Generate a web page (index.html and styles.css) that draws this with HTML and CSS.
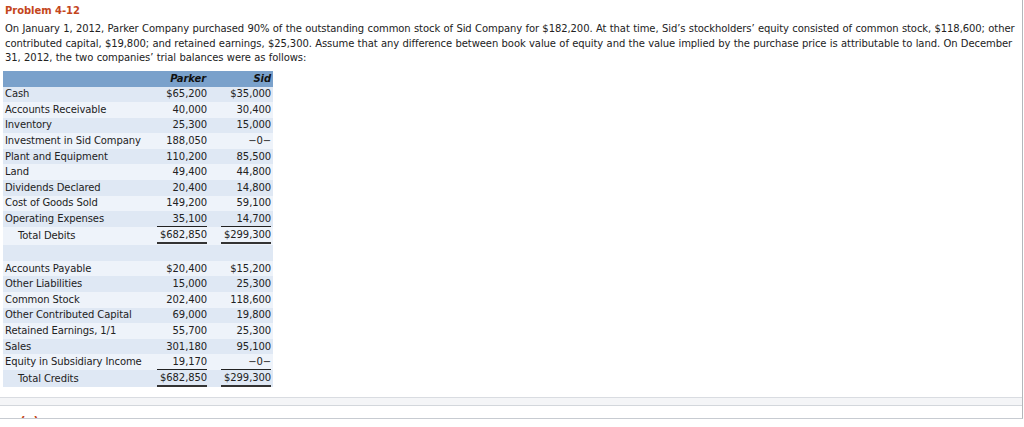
FILE: index.html
```html
<!DOCTYPE html>
<html>
<head>
<meta charset="utf-8">
<link rel="stylesheet" href="styles.css">
</head>
<body>
<div class="page">
  <div class="content">
    <div class="title">Problem 4-12</div>
    <p class="intro">On January 1, 2012, Parker Company purchased 90% of the outstanding common stock of Sid Company for $182,200. At that time, Sid’s stockholders’ equity consisted of common stock, $118,600; other contributed capital, $19,800; and retained earnings, $25,300. Assume that any difference between book value of equity and the value implied by the purchase price is attributable to land. On December 31, 2012, the two companies’ trial balances were as follows:</p>
    <table class="tb">
      <thead>
        <tr><th class="lbl"></th><th>Parker</th><th>Sid</th></tr>
      </thead>
      <tbody>
        <tr class="d"><td class="lbl">Cash</td><td>$65,200</td><td>$35,000</td></tr>
        <tr class="l"><td class="lbl">Accounts Receivable</td><td>40,000</td><td>30,400</td></tr>
        <tr class="d"><td class="lbl">Inventory</td><td>25,300</td><td>15,000</td></tr>
        <tr class="l"><td class="lbl">Investment in Sid Company</td><td>188,050</td><td>&minus;0&minus;</td></tr>
        <tr class="d"><td class="lbl">Plant and Equipment</td><td>110,200</td><td>85,500</td></tr>
        <tr class="l"><td class="lbl">Land</td><td>49,400</td><td>44,800</td></tr>
        <tr class="d"><td class="lbl">Dividends Declared</td><td>20,400</td><td>14,800</td></tr>
        <tr class="l"><td class="lbl">Cost of Goods Sold</td><td>149,200</td><td>59,100</td></tr>
        <tr class="d"><td class="lbl">Operating Expenses</td><td><span class="ul">35,100</span></td><td><span class="ul">14,700</span></td></tr>
        <tr class="l tot"><td class="lbl ind">Total Debits</td><td><span class="dl">$682,850</span></td><td><span class="dl">$299,300</span></td></tr>
        <tr class="d gap"><td class="lbl"></td><td></td><td></td></tr>
        <tr class="l"><td class="lbl">Accounts Payable</td><td>$20,400</td><td>$15,200</td></tr>
        <tr class="d"><td class="lbl">Other Liabilities</td><td>15,000</td><td>25,300</td></tr>
        <tr class="l"><td class="lbl">Common Stock</td><td>202,400</td><td>118,600</td></tr>
        <tr class="d"><td class="lbl">Other Contributed Capital</td><td>69,000</td><td>19,800</td></tr>
        <tr class="l"><td class="lbl">Retained Earnings, 1/1</td><td>55,700</td><td>25,300</td></tr>
        <tr class="d"><td class="lbl">Sales</td><td>301,180</td><td>95,100</td></tr>
        <tr class="l"><td class="lbl">Equity in Subsidiary Income</td><td><span class="ul">19,170</span></td><td><span class="ul">&minus;0&minus;</span></td></tr>
        <tr class="d tot"><td class="lbl ind">Total Credits</td><td><span class="dl">$682,850</span></td><td><span class="dl">$299,300</span></td></tr>
      </tbody>
    </table>
  </div>
  <div class="sep"></div>
  <div class="next"><span class="next-label">(a)</span></div>
</div>
</body>
</html>
```

FILE: styles.css
```css
html, body {
  margin: 0;
  padding: 0;
  background: #ffffff;
}
body {
  font-family: "DejaVu Sans", Verdana, sans-serif;
  color: #222222;
}
.page {
  width: 1022px;
  height: 418px;
  border-right: 1px solid #b4b7bb;
  border-bottom: 1px solid #c7cbd1;
  display: flex;
  flex-direction: column;
}
.content {
  padding: 4px 0 0 5px;
  flex: 1;
}
.title {
  font-size: 10px;
  font-weight: bold;
  letter-spacing: -0.05px;
  color: #c4461c;
  line-height: 14px;
}
.intro {
  font-size: 10px;
  letter-spacing: -0.08px;
  word-spacing: 0.3px;
  line-height: 14.5px;
  margin: 4px 0 0 0;
  width: 1014px;
}
.tb {
  border-collapse: collapse;
  margin: 5px 0 0 -2px;
  font-size: 10px;
  letter-spacing: -0.1px;
  width: 270px;
}
.tb th, .tb td {
  padding: 0 2px;
  text-align: right;
  white-space: nowrap;
}
.tb th {
  background: #7aa1cb;
  font-style: italic;
  font-weight: bold;
  color: #111111;
  height: 16px;
  line-height: 16px;
}
.tb td {
  height: 15.6px;
  line-height: 14px;
}
.tb .lbl {
  text-align: left;
  padding-left: 2px;
}
.tb .ind {
  padding-left: 15px;
}
.tb tr.d td { background: #dfe8f4; }
.tb tr.l td { background: #eef3fa; }
.tb tr.tot td { height: 18px; }
.tb tr.gap td { height: 16px; }
.tb tr:last-child td { height: 17px; }
.ul {
  display: inline-block;
  width: 50px;
  border-bottom: 1px solid #222;
}
.dl {
  display: inline-block;
  width: 50px;
  border-bottom: 2px solid #333;
}
.tb td:nth-child(2) { width: 50px; padding-right: 0; }
.tb td:nth-child(3) { width: 52px; padding-left: 12px; }
.tb th:nth-child(2) { padding-right: 1px; }
.sep {
  height: 7px;
  background: #f4f5f7;
  border-top: 1px solid #d9dce1;
  border-bottom: 1px solid #d3d7dc;
}
.next {
  height: 12px;
  overflow: hidden;
  position: relative;
}
.next-label {
  position: absolute;
  left: 20px;
  top: 9px;
  font-size: 12px;
  font-weight: bold;
  color: #c4461c;
}
```
